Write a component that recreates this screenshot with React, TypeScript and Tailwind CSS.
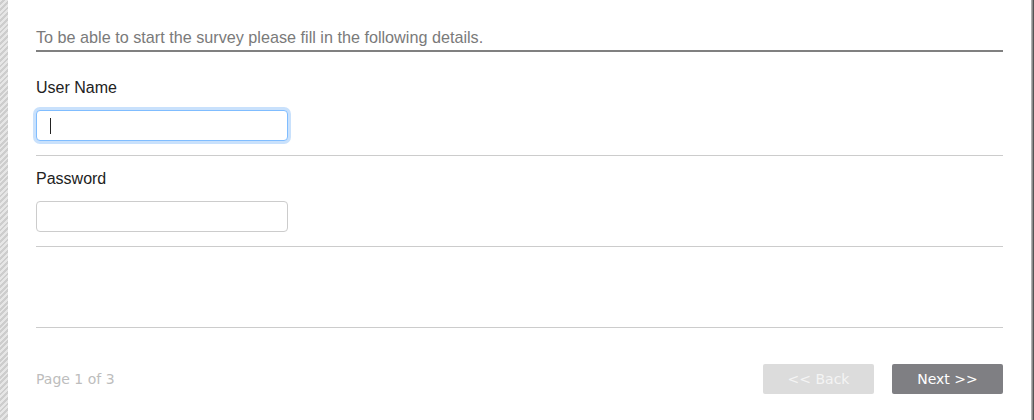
export default function App() {
  return (
    <div className="flex h-[420px] w-full bg-white font-['Liberation_Sans',Arial,sans-serif]">
      {/* left striped edge */}
      <div className="w-[8px] shrink-0 bg-[repeating-linear-gradient(135deg,#e6e6e6_0px,#e6e6e6_2px,#cdcdcd_2px,#cdcdcd_4px)]" />

      <div className="flex min-w-0 flex-1 flex-col px-[28px]">
        {/* intro */}
        <div className="border-b-2 border-[#808080] pt-[27px] pb-[3px]">
          <p className="text-[16.2px] leading-[20px] text-[#7a7a7a]">
            To be able to start the survey please fill in the following details.
          </p>
        </div>

        {/* user name */}
        <div className="border-b border-[#cccccc] pt-[26px] pb-[14px]">
          <label className="block text-[16px] leading-[20px] text-[#222]">User Name</label>
          <div className="relative mt-[12px] h-[31px] w-[252px] rounded-[4px] border border-[#80bdff] bg-white shadow-[0_0_0_3px_#c9e1fc]">
            <span className="absolute left-[13px] top-[7px] h-[16px] w-px bg-[#222]" />
          </div>
        </div>

        {/* password */}
        <div className="border-b border-[#cccccc] pt-[13px] pb-[14px]">
          <label className="block text-[16px] leading-[20px] text-[#222]">Password</label>
          <div className="mt-[12px] h-[31px] w-[252px] rounded-[4px] border border-[#cccccc] bg-white" />
        </div>

        {/* empty block */}
        <div className="h-[81px] border-b border-[#cccccc]" />

        {/* footer */}
        <div className="flex items-center justify-between pt-[36px] font-['DejaVu_Sans',Verdana,sans-serif]">
          <span className="text-[14px] text-[#bdbdbd]">Page 1 of 3</span>
          <div className="flex gap-[18px]">
            <button className="h-[30px] w-[111px] rounded-[2px] bg-[#dcdcdc] text-[14px] text-[#f4f4f4]">
              &lt;&lt; Back
            </button>
            <button className="h-[30px] w-[111px] rounded-[2px] bg-[#7f7f83] text-[14px] text-white">
              Next &gt;&gt;
            </button>
          </div>
        </div>
      </div>

      {/* right edge */}
      <div className="w-[3px] shrink-0 bg-gradient-to-r from-[#c4c4c4] via-[#8a8a8a] to-[#3a3a3a]" />
    </div>
  );
}
